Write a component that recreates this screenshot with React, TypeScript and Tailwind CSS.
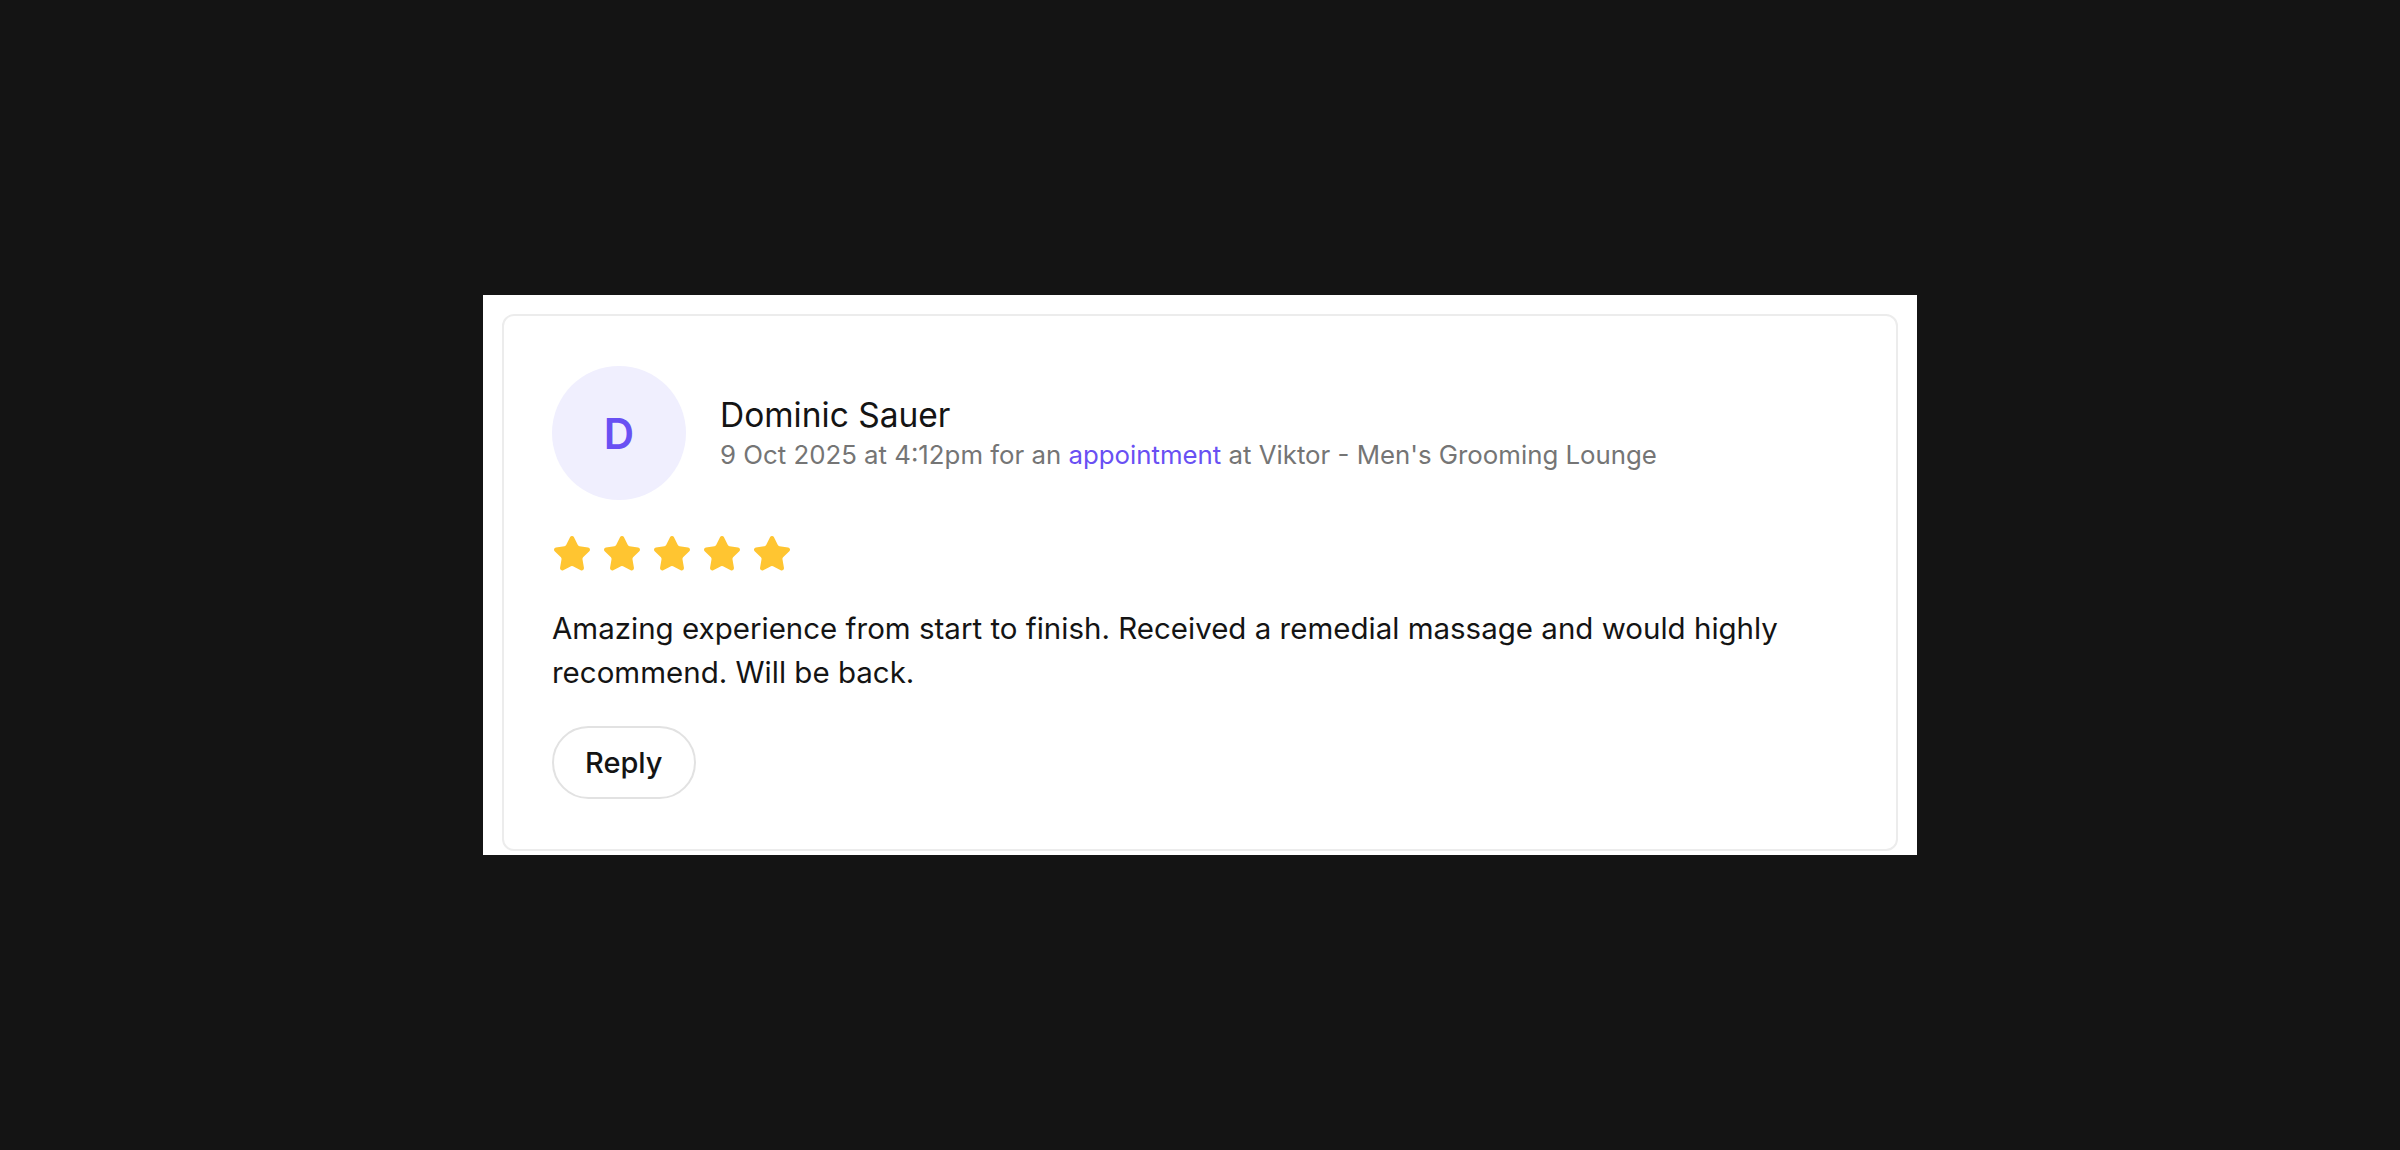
import { Star } from "lucide-react";

const font = { fontFamily: "Inter, 'Noto Sans', sans-serif" };

function Stars({ count }: { count: number }) {
  return (
    <div className="flex items-center gap-[10px]">
      {Array.from({ length: count }).map((_, i) => (
        <Star key={i} size={40} fill="#ffc531" stroke="#ffc531" strokeWidth={1.6} />
      ))}
    </div>
  );
}

export default function App() {
  return (
    <div className="flex min-h-screen items-center justify-center bg-[#141414]" style={font}>
      <div className="w-[1434px] bg-white px-[19px] pt-[19px] pb-[4px]">
        <div className="rounded-[12px] border-2 border-[#ececec] px-[48px] pt-[50px] pb-[50px]">
          <div className="flex items-center gap-[34px]">
            <div className="grid h-[134px] w-[134px] shrink-0 place-items-center rounded-full bg-[#f0effe] text-[42px] font-semibold text-[#6950f3]">
              D
            </div>
            <div className="flex flex-col">
              <span className="text-[33.5px] leading-[44px] text-[#141414]">Dominic Sauer</span>
              <span className="text-[25.8px] leading-[36px] text-[#757575]">
                9 Oct 2025 at 4:12pm for an{" "}
                <span className="text-[#6950f3]">appointment</span> at Viktor - Men's Grooming Lounge
              </span>
            </div>
          </div>
          <div className="mt-[34px]">
            <Stars count={5} />
          </div>
          <p className="mt-[32px] max-w-[1250px] text-[29.5px] leading-[44px] text-[#141414]">
            Amazing experience from start to finish. Received a remedial massage and would highly
            recommend. Will be back.
          </p>
          <button className="mt-[32px] h-[73px] rounded-full border-2 border-[#e2e2e2] px-[31px] text-[29px] font-medium text-[#141414]">
            Reply
          </button>
        </div>
      </div>
    </div>
  );
}
